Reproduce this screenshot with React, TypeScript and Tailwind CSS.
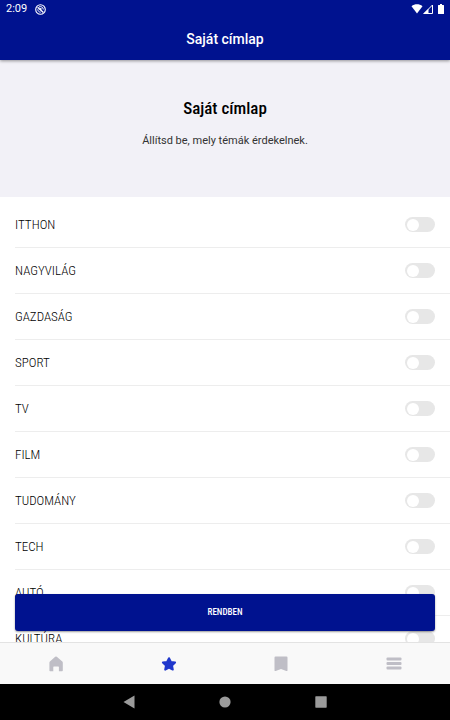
import React, { useState } from "react";
import clsx from "clsx";

const topics = [
  "ITTHON",
  "NAGYVILÁG",
  "GAZDASÁG",
  "SPORT",
  "TV",
  "FILM",
  "TUDOMÁNY",
  "TECH",
  "AUTÓ",
  "KULTÚRA",
];

const tabs = [
  {
    id: "home",
    label: "Címlap",
    icon: (
      <path d="M7.200.8a1.200 1.200 0 0 1 1.600 0l5.500 4.800c.3.3.5.7.5 1.100V14.500a.8.8 0 0 1-.8.8h-3.100v-4.300a.6.6 0 0 0-.6-.6H5.900a.6.6 0 0 0-.6.6v4.300H2.200a.8.8 0 0 1-.8-.8V6.700c0-.4.200-.8.500-1.100z" />
    ),
  },
  {
    id: "own",
    label: "Saját címlap",
    icon: (
      <path
        d="M8 2.200l1.900 3.800 4.200.5-3.100 2.900.8 4.200L8 11.600l-3.800 2 .8-4.200-3.100-2.900 4.200-.5z"
        strokeWidth="2"
        stroke="currentColor"
        strokeLinejoin="round"
      />
    ),
  },
  {
    id: "saved",
    label: "Mentett",
    icon: (
      <path d="M2.500.500h11a1 1 0 0 1 1 1v12.800a.8.8 0 0 1-1.200.7L8 13l-5.300 2a.8.8 0 0 1-1.200-.7V1.500a1 1 0 0 1 1-1z" />
    ),
  },
  {
    id: "menu",
    label: "Menü",
    icon: (
      <g>
        <rect x=".5" y="1.500" width="15" height="3" rx="1" />
        <rect x=".5" y="6" width="15" height="3" rx="1" />
        <rect x=".5" y="10.500" width="15" height="3" rx="1" />
      </g>
    ),
  },
];

const StatusBar = () => (
  <div className="flex h-[18px] items-center justify-between pr-[5px] pl-1.5 text-white">
    <div className="flex items-center gap-2">
      <span className="text-[11px] leading-4">2:09</span>
      <svg width="11" height="11" viewBox="0 0 11 11" fill="none" stroke="currentColor">
        <circle cx="5.500" cy="5.500" r="4.800" strokeWidth="1.100" />
        <path d="M2.600 3.200l5.800 5.200" strokeWidth="1.300" />
        <path d="M4 2.900c2-.9 4.300.4 4.300 2.600M2.800 5.300c0 1.700 1.300 2.900 2.900 2.900" />
        <circle cx="5.700" cy="5" r="1" fill="currentColor" stroke="none" />
      </svg>
    </div>
    <div className="flex items-center">
      <svg width="12" height="10" viewBox="0 0 11 10" fill="currentColor">
        <path d="M0 2.300C3.200-.3 7.800-.3 11 2.300L5.500 9.500z" />
      </svg>
      <svg width="10" height="10" viewBox="0 0 10 10">
        <path d="M9.500 1v8.500H1z" fill="none" stroke="currentColor" />
        <path d="M5.500 4.800V10H0z" fill="currentColor" />
      </svg>
      <svg className="ml-1" width="8" height="10" viewBox="0 0 8 10" fill="currentColor">
        <path d="M3 0h2v1h1.500a.5.5 0 0 1 .5.5v8a.5.5 0 0 1-.5.5h-5a.5.5 0 0 1-.5-.5v-8a.5.5 0 0 1 .5-.5H3z" />
      </svg>
    </div>
  </div>
);

const App = () => {
  const [selected, setSelected] = useState<string[]>([]);
  const [active, setActive] = useState("own");

  const toggle = (topic: string) =>
    setSelected((prev) =>
      prev.includes(topic) ? prev.filter((t) => t !== topic) : [...prev, topic]
    );

  return (
    <div className="flex h-screen flex-col bg-white font-['Roboto',sans-serif]">
      <header className="z-10 bg-[#00128f] shadow-[0_1px_3px_rgba(0,0,0,0.4)]">
        <StatusBar />
        <div className="flex h-[42px] items-center justify-center text-[14px] font-medium text-white">
          Saját címlap
        </div>
      </header>

      <div className="relative min-h-0 flex-1">
        <main className="h-full overflow-y-auto [scrollbar-width:none]">
          <section className="bg-[#f2f1f7] pt-9 pb-12 text-center">
            <h1 className="font-['Roboto_Condensed','Roboto',sans-serif] text-[17px] leading-6 font-medium text-black">
              Saját címlap
            </h1>
            <p className="mt-[13px] text-[11px] leading-4 text-[#333]">
              Állítsd be, mely témák érdekelnek.
            </p>
          </section>

          <ul className="pt-[5px] pl-[15px]">
            {topics.map((topic) => (
              <li key={topic} className="border-b border-[#ededed]">
                <label className="flex h-[45px] items-center justify-between pr-[15px] font-['Roboto_Condensed','Roboto',sans-serif] text-[13px] font-light text-black">
                  {topic}
                  <input
                    type="checkbox"
                    role="switch"
                    checked={selected.includes(topic)}
                    onChange={() => toggle(topic)}
                    className="flex h-[15px] w-[30px] appearance-none items-center rounded-full bg-[#e7e7e7] px-0.5 before:block before:size-3 before:rounded-full before:bg-white checked:justify-end checked:bg-[#00128f]"
                  />
                </label>
              </li>
            ))}
          </ul>
        </main>

        <button
          type="button"
          className="absolute inset-x-[15px] bottom-[11px] h-[37px] rounded-[3px] bg-[#00128f] font-['Roboto_Condensed','Roboto',sans-serif] text-[9px] font-medium text-white shadow-[0_1px_2px_rgba(0,0,0,0.4)]"
        >
          RENDBEN
        </button>
      </div>

      <nav className="flex h-[42px] border-t border-[#e3e3e3] bg-[#f9f9f9]">
        {tabs.map((tab) => (
          <button
            key={tab.id}
            type="button"
            aria-label={tab.label}
            onClick={() => setActive(tab.id)}
            className={clsx(
              "flex flex-1 items-center justify-center",
              active === tab.id ? "text-[#2038cc]" : "text-[#bfbec6]"
            )}
          >
            <svg width="16" height="16" viewBox="0 0 16 16" fill="currentColor">
              {tab.icon}
            </svg>
          </button>
        ))}
      </nav>

      <div className="flex h-9 items-center justify-center gap-[84px] bg-black text-[#9b9b9b]">
        <button type="button" aria-label="Vissza">
          <svg width="12" height="14" viewBox="0 0 12 14" fill="currentColor">
            <path d="M11.500.5v13L.5 7z" />
          </svg>
        </button>
        <button type="button" aria-label="Kezdőképernyő">
          <svg width="12" height="12" viewBox="0 0 12 12" fill="currentColor">
            <circle cx="6" cy="6" r="5.600" />
          </svg>
        </button>
        <button type="button" aria-label="Áttekintés">
          <svg width="12" height="12" viewBox="0 0 12 12" fill="currentColor">
            <rect x=".3" y=".3" width="11.400" height="11.400" rx=".6" />
          </svg>
        </button>
      </div>
    </div>
  );
};

export default App;
